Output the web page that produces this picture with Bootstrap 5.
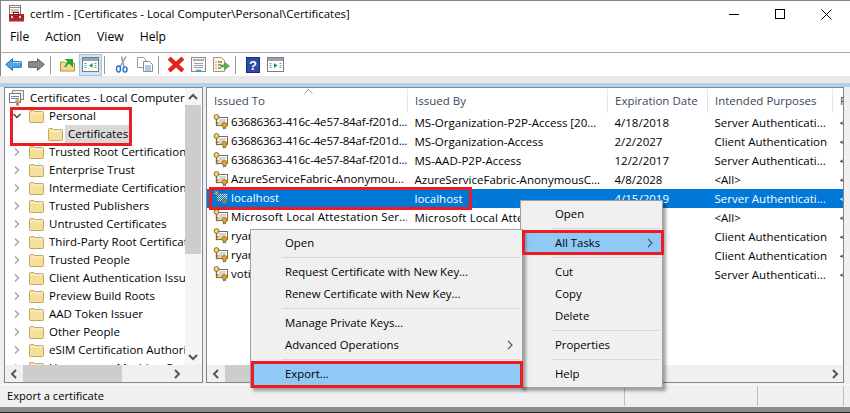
<!DOCTYPE html>
<html lang="en">
<head>
<meta charset="UTF-8">
<title>certlm</title>
<link href="https://cdn.jsdelivr.net/npm/bootstrap@5.3.0/dist/css/bootstrap.min.css" rel="stylesheet">
<style>
html, body { margin: 0; width: 850px; height: 413px; overflow: hidden; background: #222; }
body { font-family: "Open Sans", "Liberation Sans", sans-serif; font-size: 11.5px; color: #000; line-height: 1; }
.mmc-win { position: relative; width: 850px; height: 412px; background: #f0f0f0; overflow: hidden; }
.title-bar { height: 27px; background: #fff; border-top: 1px solid #858585; border-left: 1px solid #858585; font-size: 11.45px; }
.title-bar .ttl { margin-left: 6px; }
.app-ico { margin-left: 7px; margin-top: -1px; }
.win-btn { width: 46px; height: 26px; }
.win-btns { margin-right: 1px; }
.menu-bar { height: 26px; background: #fff; border-bottom: 1px solid #a9a9b6; border-left: 1px solid #858585; padding-left: 1px; font-size: 12.2px; padding-bottom: 4px; }
.menu-bar span { padding: 0 8px; }
.tool-bar { height: 23px; background: #fff; border-left: 1px solid #858585; padding-left: 1px; }
.tb-btn { width: 23px; height: 22px; border: 1px solid transparent; }
.tb-on { background: #cce4f7; border-color: #9cc8ee; }
.tb-sep { width: 1px; height: 18px; background: #9a9a9a; margin: 0 5px 0 2px; }
.strip-grey { height: 7px; background: #e9e9e9; }
.strip-blue { height: 4px; background: #b4cfe9; }
.pane-row { height: 296px; padding: 0 6px 0 4px; gap: 3px; }
.pane { background: #fff; border: 1px solid #82878f; }
.pane-left { width: 200px; }
.pane-right { width: 638px; }
.tree-box { width: 180px; overflow: hidden; padding-top: 1px; white-space: nowrap; }
.tree-row { height: 18px; padding-left: 8px; overflow: hidden; }
.tree-root { padding-left: 4px; }
.tree-sub { padding-left: 43px; }
.tree-row .chev { width: 8px; height: 8px; margin-right: 8px; flex: none; }
.tree-row .fold { width: 15px; height: 14px; margin-right: 5px; flex: none; }
.tree-sub .sel-node { background: #d9d9d9; height: 18px; padding: 0 3px; margin-left: -3px; }
.tree-root svg { margin-right: 6px; flex: none; }
.vscroll { width: 16px; margin-right: 1px; background: #f5f5f5; }
.sb-btn { height: 17px; }
.vthumb { height: 149px; background: #cdcdcd; }
.hscroll { height: 17px; background: #f0f0f0; }
.hscroll .sb-end { width: 17px; height: 17px; flex: none; }
.hscroll .sb-corner { margin-right: 17px; }
.thumb-l { width: 99px; height: 17px; margin-left: 1px; background: #cdcdcd; }
.thumb-r { width: 350px; height: 17px; margin-left: 1px; background: #cdcdcd; }
.list-box { overflow: hidden; position: relative; white-space: nowrap; }
.cert-table { table-layout: fixed; width: 700px; border-collapse: collapse; margin: 1px 0 0; }
.cert-table th { height: 24px; font-weight: 400; color: #37475a; padding: 0 0 0 7.5px; border-right: 1px solid #e5e5e5; overflow: hidden; position: relative; background: #fff; }
.cert-table td { height: 19px; padding: 0 0 0 7.5px; overflow: hidden; }
.cert-table td:first-child { padding-left: 6px; }
.cert-table th:first-child { padding-left: 7px; }
.cert-table th:last-child { border-right: 0; }
.cert-table td svg { vertical-align: middle; margin-right: 2px; margin-top: -2px; }
.cert-sel td { background: #0078d7; color: #fff; }
.guid-name { letter-spacing: -.18px; }
.wide-name { letter-spacing: .14px; }
.sort-up { position: absolute; left: 97px; top: 0; }
.status-bar { height: 23px; margin-top: 1px; padding-left: 7px; border-top: 1px solid #f7f7f7; font-size: 11.1px; }
.stat-sep { width: 1px; height: 20px; background: #bdbdbd; position: absolute; }
.bottom-edge { position: absolute; left: 0; right: 0; top: 407px; height: 5px; background: #8c8c8c; }
.ctx-menu { display: block; min-width: 0; padding: 2px 0; margin: 0; border: 1px solid #a0a0a0; border-radius: 0; background: #f0f0f0; font-size: 11.35px; box-shadow: 3px 3px 3px rgba(0,0,0,.35); }
.ctx-menu .dropdown-item { height: 22px; padding: 0 9px 0 34px; display: flex; align-items: center; justify-content: space-between; color: #000; background: transparent; }
.ctx-menu .dropdown-item.ctx-hot { background: #90c8f6; }
.ctx-menu .dropdown-divider { margin: 3px 2px 3px 31px; height: 1px; border: 0; border-top: 1px solid #d7d7d7; opacity: 1; }
.ctx-menu li { list-style: none; }
.menu-tasks { left: 520px; top: 200px; width: 143px; z-index: 5; }
.menu-cert { left: 250px; top: 229px; width: 273px; z-index: 6; }
.red-box { position: absolute; border: 3px solid #ed1c24; z-index: 9; }
.red-personal { left: 10px; top: 107px; width: 122px; height: 39px; }
.red-host { left: 209px; top: 187px; width: 263px; height: 23px; }
.red-tasks { left: 522px; top: 230px; width: 142px; height: 25px; }
.red-export { left: 251px; top: 361px; width: 272px; height: 27px; }
</style>
</head>
<body>
<svg width="0" height="0" class="d-block position-absolute">
  <defs>
    <symbol id="folder" viewBox="0 0 15 14">
      <path d="M.5 12.5V2.5q0-1 1-1h3l1 1h8q1 0 1 1v9q0 1-1 1h-12q-1 0-1-1z" fill="#f6de9c" stroke="#c8a658"/>
      <path d="M1.5 4h12" stroke="#fdf3cf"/><path d="M9 2.5h4" stroke="#8fb4d8"/>
    </symbol>
    <symbol id="cert" viewBox="0 0 16 16">
      <rect x="3.5" y="3.5" width="11" height="8" fill="#fff" stroke="#6f6f6f"/>
      <path d="M6 6h7M6 8h6M6 10h4" stroke="#a9a9a9"/>
      <circle cx="3.5" cy="3" r="2.4" fill="#f2d675" stroke="#8b6d22"/>
      <path d="M3.5 5v7M3.5 9h2M3.5 11.5h2" stroke="#8b6d22" stroke-width="1.4"/>
      <path d="M10 12v3.5l1.5-1 1.5 1V12z" fill="#2c6fd0"/>
      <circle cx="11.5" cy="11" r="2.6" fill="#e5a11c" stroke="#b47a10"/>
    </symbol>
    <pattern id="dith" width="2" height="2" patternUnits="userSpaceOnUse">
      <rect width="1" height="1" fill="#0078d7"/><rect x="1" y="1" width="1" height="1" fill="#0078d7"/>
    </pattern>
    <symbol id="chev-r" viewBox="0 0 8 8"><path d="M2 .5 5.5 4 2 7.5" fill="none" stroke="#a6a6a6" stroke-width="1.5"/></symbol>
    <symbol id="win-ico" viewBox="0 0 17 15">
      <rect x=".5" y=".5" width="16" height="14" fill="#fff" stroke="#7d7d7d"/>
      <rect x="1" y="1" width="15" height="3" fill="#9aa3ad"/>
      <path d="M2.5 6.5h2M2.5 8.5h2M2.5 10.5h2M12.5 6.5h2M12.5 8.5h2M12.5 10.5h2" stroke="#6f93b8"/>
    </symbol>
  </defs>
</svg>

<div class="mmc-win">
  <div class="title-bar d-flex align-items-center">
    <svg class="app-ico" width="16" height="17" viewBox="0 0 16 17">
      <rect x="1.5" y=".5" width="11" height="11" fill="#fff" stroke="#777"/>
      <path d="M2 2.5h10M3 5h8M3 7h8" stroke="#8c8c8c"/>
      <rect x="1" y="9" width="15" height="7.5" fill="#b3262b"/>
      <rect x="5.5" y="7.5" width="5" height="2" fill="none" stroke="#7a1a1d"/>
      <path d="M1 12h15" stroke="#7a1a1d"/><rect x="3" y="11" width="2" height="2" fill="#f0d0c0"/><rect x="11" y="11" width="2" height="2" fill="#f0d0c0"/>
    </svg>
    <span class="ttl">certlm - [Certificates - Local Computer\Personal\Certificates]</span>
    <div class="win-btns ms-auto d-flex">
      <div class="win-btn d-flex align-items-center justify-content-center"><svg width="10" height="10" viewBox="0 0 10 10"><path d="M0 5.5h10" stroke="#000"/></svg></div>
      <div class="win-btn d-flex align-items-center justify-content-center"><svg width="10" height="10" viewBox="0 0 10 10"><rect x=".5" y=".5" width="9" height="9" fill="none" stroke="#000"/></svg></div>
      <div class="win-btn d-flex align-items-center justify-content-center"><svg width="11" height="11" viewBox="0 0 11 11"><path d="M.5.5l10 10M10.5.5l-10 10" stroke="#000"/></svg></div>
    </div>
  </div>
  <div class="menu-bar d-flex align-items-center">
    <span>File</span><span>Action</span><span>View</span><span>Help</span>
  </div>
  <div class="tool-bar d-flex align-items-center">
    <div class="tb-btn d-flex align-items-center justify-content-center"><svg width="17" height="13" viewBox="0 0 17 13"><path d="M.7 6.5 7.5.7v3h8.8v5.6H7.500v3z" fill="#4ea6ea" stroke="#1f6fbf"/><path d="M8 4.500h8" stroke="#a9d8fa"/></svg></div>
    <div class="tb-btn d-flex align-items-center justify-content-center"><svg width="17" height="13" viewBox="0 0 17 13"><path d="M16.300 6.500 9.500.7v3H.7v5.600h8.800v3z" fill="#8b8b8b" stroke="#5c5c5c"/></svg></div>
    <div class="tb-sep"></div>
    <div class="tb-btn d-flex align-items-center justify-content-center"><svg width="15" height="15" viewBox="0 0 15 15"><path d="M.5 14V5h4l1 1h9v8z" fill="#f3d98f" stroke="#b3923f"/><path d="M5 10 9 4.500M7 3h5v5z" stroke="#2fa12f" stroke-width="2" fill="#2fa12f"/></svg></div>
    <div class="tb-btn tb-on d-flex align-items-center justify-content-center"><svg width="17" height="15" viewBox="0 0 17 15"><use href="#win-ico"/><path d="M10.500 6v5L7 8.500z" fill="#1f9d3a"/></svg></div>
    <div class="tb-sep"></div>
    <div class="tb-btn d-flex align-items-center justify-content-center"><svg width="14" height="17" viewBox="0 0 14 17"><path d="M11 .5 5 11M6.500.5 9 11" stroke="#8f98a3" stroke-width="1.400"/><ellipse cx="3.500" cy="13" rx="2" ry="3" fill="none" stroke="#1c6fd0" stroke-width="1.400"/><ellipse cx="10" cy="13.500" rx="2" ry="2.600" fill="none" stroke="#1c6fd0" stroke-width="1.400"/></svg></div>
    <div class="tb-btn d-flex align-items-center justify-content-center"><svg width="16" height="15" viewBox="0 0 16 15"><path d="M.5.5h6l2 2v8h-8z" fill="#fff" stroke="#9a9a9a"/><path d="M6.500 4.500h6l3 3v7h-9z" fill="#fff" stroke="#8a8a9a"/><path d="M8 9h6M8 11h6M8 13h6" stroke="#6f93c8"/></svg></div>
    <div class="tb-sep"></div>
    <div class="tb-btn d-flex align-items-center justify-content-center"><svg width="18" height="17" viewBox="0 0 17 16"><path d="M2 2l13 12M15 2 2 14" stroke="#e02424" stroke-width="4"/></svg></div>
    <div class="tb-btn d-flex align-items-center justify-content-center"><svg width="15" height="15" viewBox="0 0 15 15"><rect x=".5" y=".5" width="14" height="14" fill="#f7f7f7" stroke="#8a8a8a"/><rect x="2" y="2" width="11" height="2" fill="#a8b0ba"/><path d="M3 6.500h9M3 8.500h9M3 10.500h9" stroke="#9aa3ad"/><path d="M5 13.500h5" stroke="#2ca5e0" stroke-width="1.500"/></svg></div>
    <div class="tb-btn d-flex align-items-center justify-content-center"><svg width="17" height="15" viewBox="0 0 17 15"><path d="M.5.5h8l3 3v11H.5z" fill="#fdf6dc" stroke="#a09a80"/><path d="M2.500 5h1M5 5h4M2.500 8h1M5 8h3M2.500 11h1M5 11h3" stroke="#444"/><path d="M8 8h4V5.500L16.500 9 12 12.500V10H8z" fill="#54b84a" stroke="#3c963a" stroke-width=".6"/></svg></div>
    <div class="tb-sep"></div>
    <div class="tb-btn d-flex align-items-center justify-content-center"><svg width="14" height="16" viewBox="0 0 14 16"><rect x=".5" y=".5" width="13" height="15" fill="#2f49a8" stroke="#1c2d78"/><text x="7" y="13" text-anchor="middle" font-family="Liberation Sans" font-weight="700" font-size="13" fill="#fff">?</text></svg></div>
    <div class="tb-btn d-flex align-items-center justify-content-center"><svg width="17" height="15" viewBox="0 0 17 15"><use href="#win-ico"/><path d="M7 6v5l3.500-2.500z" fill="#1f9d3a"/></svg></div>
  </div>
  <div class="strip-grey"></div>
  <div class="strip-blue"></div>
  <div class="pane-row d-flex">
    <div class="pane pane-left d-flex flex-column">
      <div class="d-flex flex-grow-1 overflow-hidden">
        <div class="tree-box">
          <div class="tree-row tree-root d-flex align-items-center">
            <svg width="15" height="16" viewBox="0 0 15 16"><rect x="3.500" y=".5" width="11" height="9" fill="#eee" stroke="#8a8a8a"/><rect x=".5" y="3.500" width="11" height="9" fill="#fff" stroke="#777"/><path d="M2 6.500h8M2 8.500h8" stroke="#5b82b8"/><circle cx="8.500" cy="11.500" r="2.300" fill="#e5a11c"/><path d="M7.500 13v3l1-.8 1 .8v-3z" fill="#2c6fd0"/></svg>
            <span>Certificates - Local Computer</span>
          </div>
          <div class="tree-row d-flex align-items-center">
            <svg class="chev" viewBox="0 0 8 8"><path d="M.5 2 4 5.500 7.500 2" fill="none" stroke="#404040" stroke-width="1.500"/></svg>
            <svg class="fold"><use href="#folder"/></svg><span>Personal</span>
          </div>
          <div class="tree-row tree-sub d-flex align-items-center">
            <svg class="fold"><use href="#folder"/></svg><span class="sel-node d-flex align-items-center">Certificates</span>
          </div>
          <div class="tree-row d-flex align-items-center"><svg class="chev"><use href="#chev-r"/></svg><svg class="fold"><use href="#folder"/></svg><span>Trusted Root Certification Authorities</span></div>
          <div class="tree-row d-flex align-items-center"><svg class="chev"><use href="#chev-r"/></svg><svg class="fold"><use href="#folder"/></svg><span>Enterprise Trust</span></div>
          <div class="tree-row d-flex align-items-center"><svg class="chev"><use href="#chev-r"/></svg><svg class="fold"><use href="#folder"/></svg><span>Intermediate Certification Authorities</span></div>
          <div class="tree-row d-flex align-items-center"><svg class="chev"><use href="#chev-r"/></svg><svg class="fold"><use href="#folder"/></svg><span>Trusted Publishers</span></div>
          <div class="tree-row d-flex align-items-center"><svg class="chev"><use href="#chev-r"/></svg><svg class="fold"><use href="#folder"/></svg><span>Untrusted Certificates</span></div>
          <div class="tree-row d-flex align-items-center"><svg class="chev"><use href="#chev-r"/></svg><svg class="fold"><use href="#folder"/></svg><span>Third-Party Root Certification Authorities</span></div>
          <div class="tree-row d-flex align-items-center"><svg class="chev"><use href="#chev-r"/></svg><svg class="fold"><use href="#folder"/></svg><span>Trusted People</span></div>
          <div class="tree-row d-flex align-items-center"><svg class="chev"><use href="#chev-r"/></svg><svg class="fold"><use href="#folder"/></svg><span>Client Authentication Issuers</span></div>
          <div class="tree-row d-flex align-items-center"><svg class="chev"><use href="#chev-r"/></svg><svg class="fold"><use href="#folder"/></svg><span>Preview Build Roots</span></div>
          <div class="tree-row d-flex align-items-center"><svg class="chev"><use href="#chev-r"/></svg><svg class="fold"><use href="#folder"/></svg><span>AAD Token Issuer</span></div>
          <div class="tree-row d-flex align-items-center"><svg class="chev"><use href="#chev-r"/></svg><svg class="fold"><use href="#folder"/></svg><span>Other People</span></div>
          <div class="tree-row d-flex align-items-center"><svg class="chev"><use href="#chev-r"/></svg><svg class="fold"><use href="#folder"/></svg><span>eSIM Certification Authorities</span></div>
          <div class="tree-row d-flex align-items-center"><svg class="chev"><use href="#chev-r"/></svg><svg class="fold"><use href="#folder"/></svg><span>Homegroup Machine Certificates</span></div>
        </div>
        <div class="vscroll d-flex flex-column">
          <div class="sb-btn d-flex align-items-center justify-content-center"><svg width="10" height="8" viewBox="0 0 10 8"><path d="M1 6 5 2l4 4" fill="none" stroke="#555" stroke-width="2"/></svg></div>
          <div class="vthumb"></div>
          <div class="sb-btn mt-auto d-flex align-items-center justify-content-center"><svg width="10" height="8" viewBox="0 0 10 8"><path d="M1 2l4 4 4-4" fill="none" stroke="#555" stroke-width="2"/></svg></div>
        </div>
      </div>
      <div class="hscroll d-flex">
        <div class="sb-end d-flex align-items-center justify-content-center"><svg width="8" height="10" viewBox="0 0 8 10"><path d="M6 1 2 5l4 4" fill="none" stroke="#555" stroke-width="2"/></svg></div>
        <div class="thumb-l"></div>
        <div class="sb-end sb-corner ms-auto d-flex align-items-center justify-content-center"><svg width="8" height="10" viewBox="0 0 8 10"><path d="M2 1l4 4-4 4" fill="none" stroke="#555" stroke-width="2"/></svg></div>
      </div>
    </div>
    <div class="pane pane-right d-flex flex-column">
      <div class="list-box flex-grow-1">
        <table class="cert-table">
          <colgroup><col style="width:200px"><col style="width:200px"><col style="width:100px"><col style="width:125px"><col style="width:75px"></colgroup>
          <thead>
            <tr><th>Issued To<svg class="sort-up" width="9" height="5" viewBox="0 0 9 5"><path d="M.5 4.500l4-4 4 4" fill="none" stroke="#9a9a9a"/></svg></th><th>Issued By</th><th>Expiration Date</th><th>Intended Purposes</th><th>Friendly Name</th></tr>
          </thead>
          <tbody>
            <tr><td class="guid-name"><svg width="16" height="16"><use href="#cert"/></svg>63686363-416c-4e57-84af-f201d...</td><td>MS-Organization-P2P-Access [20...</td><td>4/18/2018</td><td>Server Authenticati...</td><td>&lt;None&gt;</td></tr>
            <tr><td class="guid-name"><svg width="16" height="16"><use href="#cert"/></svg>63686363-416c-4e57-84af-f201d...</td><td>MS-Organization-Access</td><td>2/2/2027</td><td>Client Authentication</td><td>&lt;None&gt;</td></tr>
            <tr><td class="guid-name"><svg width="16" height="16"><use href="#cert"/></svg>63686363-416c-4e57-84af-f201d...</td><td>MS-AAD-P2P-Access</td><td>12/2/2017</td><td>Server Authenticati...</td><td>&lt;None&gt;</td></tr>
            <tr><td><svg width="16" height="16"><use href="#cert"/></svg>AzureServiceFabric-Anonymou...</td><td>AzureServiceFabric-AnonymousC...</td><td>4/8/2028</td><td>&lt;All&gt;</td><td>&lt;None&gt;</td></tr>
            <tr class="cert-sel"><td><svg width="16" height="16"><use href="#cert"/><rect width="16" height="16" fill="url(#dith)"/></svg>localhost</td><td>localhost</td><td>4/15/2019</td><td>Server Authenticati...</td><td>&lt;None&gt;</td></tr>
            <tr><td class="wide-name"><svg width="16" height="16"><use href="#cert"/></svg>Microsoft Local Attestation Ser...</td><td class="wide-name">Microsoft Local Attestation Service</td><td>5/6/2018</td><td>&lt;All&gt;</td><td>&lt;None&gt;</td></tr>
            <tr><td><svg width="16" height="16"><use href="#cert"/></svg>ryan</td><td>ryan</td><td></td><td>Client Authentication</td><td>&lt;None&gt;</td></tr>
            <tr><td><svg width="16" height="16"><use href="#cert"/></svg>ryan</td><td>ryan</td><td></td><td>Client Authentication</td><td>&lt;None&gt;</td></tr>
            <tr><td><svg width="16" height="16"><use href="#cert"/></svg>voti</td><td>voti</td><td>1/1/2019</td><td>Server Authenticati...</td><td>&lt;None&gt;</td></tr>
          </tbody>
        </table>
      </div>
      <div class="hscroll d-flex">
        <div class="sb-end d-flex align-items-center justify-content-center"><svg width="8" height="10" viewBox="0 0 8 10"><path d="M6 1 2 5l4 4" fill="none" stroke="#555" stroke-width="2"/></svg></div>
        <div class="thumb-r"></div>
        <div class="sb-end ms-auto d-flex align-items-center justify-content-center"><svg width="8" height="10" viewBox="0 0 8 10"><path d="M2 1l4 4-4 4" fill="none" stroke="#555" stroke-width="2"/></svg></div>
      </div>
    </div>
  </div>
  <div class="status-bar d-flex align-items-center">Export a certificate</div>
  <div class="stat-sep" style="left:624px;top:386px"></div>
  <div class="stat-sep" style="left:757px;top:386px"></div>
  <div class="stat-sep" style="left:843px;top:386px"></div>
  <div class="bottom-edge"></div>

  <ul class="dropdown-menu ctx-menu menu-tasks">
    <li><a class="dropdown-item">Open</a></li>
    <li><hr class="dropdown-divider"></li>
    <li><a class="dropdown-item ctx-hot">All Tasks<svg width="6" height="10" viewBox="0 0 6 10"><path d="M1 1l4 4-4 4" fill="none" stroke="#555" stroke-width="1.200"/></svg></a></li>
    <li><hr class="dropdown-divider"></li>
    <li><a class="dropdown-item">Cut</a></li>
    <li><a class="dropdown-item">Copy</a></li>
    <li><a class="dropdown-item">Delete</a></li>
    <li><hr class="dropdown-divider"></li>
    <li><a class="dropdown-item">Properties</a></li>
    <li><hr class="dropdown-divider"></li>
    <li><a class="dropdown-item">Help</a></li>
  </ul>
  <ul class="dropdown-menu ctx-menu menu-cert">
    <li><a class="dropdown-item">Open</a></li>
    <li><hr class="dropdown-divider"></li>
    <li><a class="dropdown-item">Request Certificate with New Key...</a></li>
    <li><a class="dropdown-item">Renew Certificate with New Key...</a></li>
    <li><hr class="dropdown-divider"></li>
    <li><a class="dropdown-item">Manage Private Keys...</a></li>
    <li><a class="dropdown-item">Advanced Operations<svg width="6" height="10" viewBox="0 0 6 10"><path d="M1 1l4 4-4 4" fill="none" stroke="#555" stroke-width="1.200"/></svg></a></li>
    <li><hr class="dropdown-divider"></li>
    <li><a class="dropdown-item ctx-hot">Export...</a></li>
  </ul>

  <div class="red-box red-personal"></div>
  <div class="red-box red-host"></div>
  <div class="red-box red-tasks"></div>
  <div class="red-box red-export"></div>
</div>
<script src="https://cdn.jsdelivr.net/npm/bootstrap@5.3.0/dist/js/bootstrap.bundle.min.js"></script>
</body>
</html>
